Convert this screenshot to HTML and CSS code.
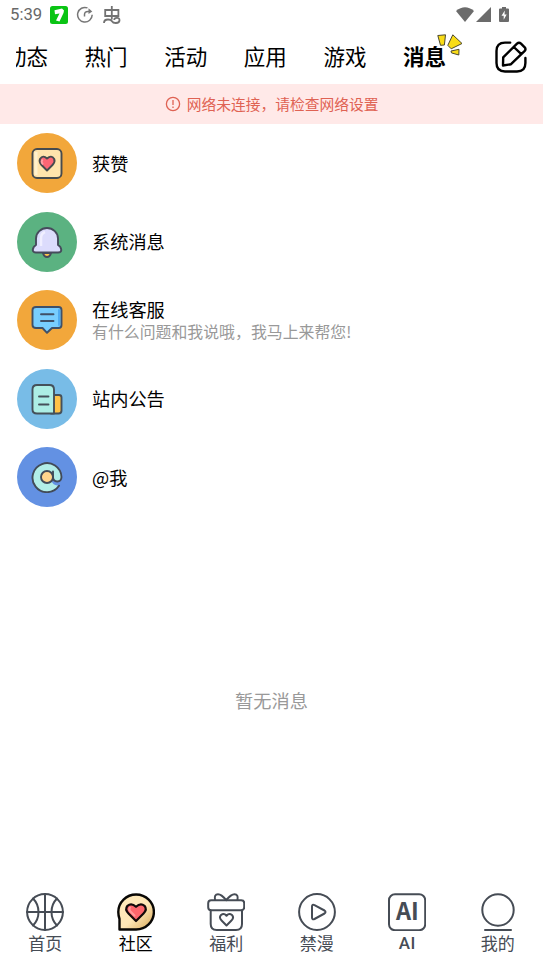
FILE: index.html
```html
<!DOCTYPE html>
<html lang="zh-CN">
<head>
<meta charset="UTF-8">
<title>消息</title>
<link rel="stylesheet" href="styles.css">
</head>
<body>
<div class="app">
  <header class="status">
    <span class="clock">5:39</span>
    <svg class="s-seven" viewBox="0 0 18 18"><rect width="18" height="18" rx="2.5" fill="#0ac414"/><path d="M4.500 4.200 12 2.500 14 4.500 13.500 7 9.500 15.500 6 14.500 9.500 7.500 5 8.200Z" fill="#fff"/></svg>
    <svg class="s-sync" viewBox="0 0 18 18" fill="none" stroke="#777" stroke-width="1.5"><path d="M11.5 1.9A7.3 7.3 0 1 0 16.2 8.8"/><path d="M8.5 10.5V8.5Q8.5 5.4 12 5.4H14.5"/><path d="M12.5 2.2 16.3 5.4 12.5 8Z" fill="#777" stroke="none"/></svg>
    <svg class="s-bug" viewBox="0 0 18 18" fill="none" stroke="#727272" stroke-width="1.8"><path d="M2.200 4H15.400V10H2.200ZM8.800 0V13.500M1 17Q1 13.500 5 13.500Q8 13.500 9 15.300T13 17Q16.500 17 16.500 14.300T13.800 11.800T11.300 14"/></svg>
    <span class="spacer"></span>
    <svg class="s-wifi" viewBox="0 0 18 15"><path d="M9 15 0 4Q9-3.5 18 4Z" fill="#6b6b6b"/></svg>
    <svg class="s-signal" viewBox="0 0 15 15"><path d="M15 0V15H0Z" fill="#6b6b6b"/></svg>
    <svg class="s-battery" viewBox="0 0 10 15"><path d="M3 0H7V1.5H9Q10 1.5 10 2.5V14Q10 15 9 15H1Q0 15 0 14V2.5Q0 1.5 1 1.5H3Z" fill="#6b6b6b"/><path d="M5.8 3.5 2.5 8.8H4.7V12.8L7.7 7.5H5.5Z" fill="#fff"/></svg>
  </header>

  <div class="topbar">
    <nav class="tabs">
      <span>动态</span><span>热门</span><span>活动</span><span>应用</span><span>游戏</span><span class="active">消息</span>
    </nav>
    <svg class="spark" viewBox="0 0 26 22" fill="#f9dc16" stroke="#4c4930" stroke-width="1" stroke-linejoin="round"><path d="M.8 1.500 8.500.8 7.400 11 3.500 11.300Z"/><path d="M15.800.8 25 9.500 14.200 14.800 10.800 11.300Z"/><path d="M14 17 22 15.300 21.800 21 14.500 18.900Z"/></svg>
    <svg class="compose" viewBox="0 0 32 32" fill="none" stroke="#000" stroke-width="2.4" stroke-linecap="round" stroke-linejoin="round"><path d="M15.2 1.6H10Q1.5 1.6 1.5 10V22Q1.5 30.5 10 30.5H22Q30.4 30.5 30.4 22V17"/><path d="M8 24.5 8.2 16.4 22 2.6Q24 .7 26 2.6L29.7 6.3Q31.3 8.3 29.5 10.2L16 23.2ZM18.8 6 26.3 13.2"/></svg>
  </div>

  <div class="notice">
    <svg viewBox="0 0 16 16" fill="none" stroke="#df6253" stroke-width="1.3"><circle cx="8" cy="8" r="6.6"/><path d="M8 4V9M8 10.5V12"/></svg>
    <span>网络未连接，请检查网络设置</span>
  </div>

  <main class="list">
    <div class="row">
      <div class="avatar orange">
        <svg viewBox="0 0 32 32" stroke="#464b4e" stroke-width="1.9" stroke-linejoin="round"><rect x="1.500" y="2" width="29" height="29" rx="4.500" fill="#ffe4ac"/><path d="M5 5V28" stroke="#fff1cd" stroke-width="3"/><path d="M16 23.5 10.5 18Q7.7 14.8 9 12Q12 7.5 16 11.5Q20.500 7.500 23.200 12Q24.500 15 21.500 18Z" fill="#fc6675"/><path d="M11.7 12.5Q9.500 15 12 17.300" fill="none" stroke="#ffa1a5" stroke-width="1.8"/></svg>
      </div>
      <div class="text"><div class="name">获赞</div></div>
    </div>
    <div class="row">
      <div class="avatar green">
        <svg viewBox="0 0 32 32" stroke="#464b5c" stroke-width="1.9" stroke-linejoin="round"><path d="M12 27Q13 31 16 31T20 27Z" fill="#ffc44d"/><path d="M5 19V12.500A11 10.500 0 0 1 27 12.500V19Q30 20.500 30.300 24Q30.200 26.500 27 26.500H5Q2 26.500 1.700 24Q2.200 20.500 5 19Z" fill="#dcdcfc"/><path d="M10 20V12Q10 7.500 14 6" fill="none" stroke="#f0efff" stroke-width="2.500"/></svg>
      </div>
      <div class="text"><div class="name">系统消息</div></div>
    </div>
    <div class="row">
      <div class="avatar orange">
        <svg viewBox="0 0 32 32" stroke="#3f5068" stroke-width="1.900" stroke-linejoin="round" stroke-linecap="round"><path d="M5 3H27.500Q30.500 3 30.500 6V21Q30.500 24 27.500 24H21L16 28.800 11.500 24H5Q1.500 24 1.500 21V6Q1.500 3 5 3Z" fill="#78ceff"/><path d="M28 6V21" stroke="#50acf1" stroke-width="2"/><path d="M10 10.300H22.500M10 17H22.500" fill="none"/></svg>
      </div>
      <div class="text"><div class="name">在线客服</div><div class="desc">有什么问题和我说哦，我马上来帮您!</div></div>
    </div>
    <div class="row">
      <div class="avatar sky">
        <svg viewBox="0 0 32 32" stroke="#45505a" stroke-width="1.900" stroke-linejoin="round" stroke-linecap="round"><path d="M20 12H28Q30.500 12 30.500 14.500V27.500Q30.500 30.500 27.500 30.500H20Z" fill="#ffc247"/><path d="M6 2H18.500Q23 2 23 6.500V30.500H6Q1.500 30.500 1.500 26.500V6.500Q1.500 2 6 2Z" fill="#aceee5"/><path d="M8 13.500H17.500M8 21.500H17.500" fill="none"/></svg>
      </div>
      <div class="text"><div class="name">站内公告</div></div>
    </div>
    <div class="row">
      <div class="avatar blue">
        <svg viewBox="0 0 32 32" stroke="#424b58" stroke-width="1.900" stroke-linejoin="round" stroke-linecap="round"><path d="M28 24.800A14.500 14.500 0 1 1 30.500 16Q30.300 20.500 26.300 20.500Q22 20.300 22 16A6 6 0 1 0 20.500 20Q22 24 26.300 24.500Z" fill="#b2eee8" stroke="none"/><circle cx="16" cy="16" r="6" fill="#ffd48c"/><path d="M28 24.800A14.500 14.500 0 1 1 30.500 16Q30.300 20.500 26.300 20.500Q22 20.300 22 16V10.500" fill="none"/></svg>
      </div>
      <div class="text"><div class="name">@我</div></div>
    </div>
  </main>

  <div class="empty">暂无消息</div>

  <nav class="bottom">
    <div class="item">
      <svg viewBox="0 0 38 38"><circle cx="19" cy="19" r="17.900"/><path d="M1 19H37M19 1V37M7 5.500Q12.500 11 12.500 19T7 32.500M31 5.500Q25.500 11 25.500 19T31 32.500"/></svg>
      <span>首页</span>
    </div>
    <div class="item on">
      <svg viewBox="0 0 38 38"><defs><linearGradient id="bubble" x1="0" y1="0" x2="1" y2="1"><stop offset="0" stop-color="#ffeabd"/><stop offset=".55" stop-color="#ffe7b6"/><stop offset="1" stop-color="#d5a452"/></linearGradient></defs><path d="M2.500 36.500V26Q1.300 22.500 1.300 19A17.800 17.500 0 1 1 19 36.500Z" fill="url(#bubble)" stroke="#090705" stroke-width="2.400" stroke-linejoin="round"/><path d="M19 28 11.500 20.500Q7.500 16.500 10.500 12.800Q14.500 9.500 19 13.800Q23.500 9.500 27.500 12.800Q30.500 16.500 26.500 20.500Z" fill="#fd666c" stroke="#130909" stroke-width="2.200"/><path d="M13 14.500Q11.500 16.500 13.500 18.500L17.500 22.500" stroke="#ff9a9a"/></svg>
      <span>社区</span>
    </div>
    <div class="item">
      <svg viewBox="0 0 38 38"><rect x="1.200" y="7.200" width="36" height="10" rx="3"/><path d="M3.700 17.500V31Q3.700 37 9.700 37H29Q35 37 35 31V17.500"/><path d="M8 7Q7 1.200 11 1.200Q14.500 1.200 19.200 7.200Q24 1.200 27.500 1.200Q31.500 1.200 30.500 7"/><path d="M19.500 32.500 14.800 27.800Q11.500 24.500 14 22Q17 19.700 19.500 22.800Q22 19.700 25 22Q27.500 24.500 24.200 27.800Z"/></svg>
      <span>福利</span>
    </div>
    <div class="item">
      <svg viewBox="0 0 38 38"><circle cx="19" cy="19" r="17.900"/><path d="M14 13.500Q14 11 16.500 12.200L26.500 17.500Q28.500 19 26.500 20.500L16.500 26Q14 27.200 14 24.500Z"/></svg>
      <span>禁漫</span>
    </div>
    <div class="item">
      <svg viewBox="0 0 38 38"><rect x="1" y="1.200" width="36.200" height="36" rx="6"/><text x="19.300" y="27" text-anchor="middle">AI</text></svg>
      <span class="latin">AI</span>
    </div>
    <div class="item">
      <svg viewBox="0 0 38 38"><circle cx="19" cy="17" r="15.700"/><path d="M6 37H32"/></svg>
      <span>我的</span>
    </div>
  </nav>
</div>
</body>
</html>
```
FILE: styles.css
```css
* { box-sizing: border-box; }
body {
  margin: 0;
  background: #fff;
  color: #000;
  font-family: "Noto Sans CJK SC", sans-serif;
}
svg { display: block; flex: none; }
.app {
  display: flex;
  flex-direction: column;
  width: 543px;
  height: 965px;
  overflow: hidden;
}
.status {
  display: flex;
  align-items: center;
  height: 30px;
  padding: 0 34px 1px 10px;
  flex: none;
}
.clock {
  width: 40px;
  font: 16.7px/30px Roboto, sans-serif;
  color: #686868;
}
.s-seven { width: 18px; height: 18px; }
.s-sync { width: 18px; height: 18px; margin-left: 8px; }
.s-bug { width: 18px; height: 18px; margin-left: 9px; }
.spacer { flex: 1; }
.s-wifi { width: 18px; height: 15px; }
.s-signal { width: 15px; height: 15px; margin-left: 2px; }
.s-battery { width: 10px; height: 15px; margin: 0 0 0 8px; }
.topbar {
  position: relative;
  display: flex;
  align-items: center;
  justify-content: space-between;
  height: 54px;
  padding: 0 16.5px 0 16px;
  flex: none;
}
.tabs {
  display: flex;
  justify-content: flex-end;
  gap: 36.6px;
  width: 430px;
  height: 54px;
  overflow: hidden;
  font-size: 21.5px;
  line-height: 52px;
  white-space: nowrap;
}
.tabs .active { font-weight: 700; }
.spark {
  position: absolute;
  left: 437px;
  top: 4px;
  width: 26px;
  height: 22px;
}
.compose { width: 32px; height: 32px; }
.notice {
  display: flex;
  align-items: center;
  justify-content: center;
  gap: 6px;
  height: 40px;
  flex: none;
  background: #ffe9e8;
  color: #df6253;
  font-size: 14.75px;
}
.notice svg { width: 16px; height: 16px; }
.notice span { padding-bottom: 1px; }
.list { flex: none; }
.row {
  display: flex;
  align-items: center;
  gap: 15px;
  height: 78.5px;
  padding-left: 17px;
}
.avatar {
  display: flex;
  align-items: center;
  justify-content: center;
  width: 60px;
  height: 60px;
  border-radius: 50%;
}
.avatar svg { width: 32px; height: 32px; }
.text { padding-bottom: 1px; }
.orange { background: #f2a73b; }
.green { background: #5bb281; }
.sky { background: #78bce7; }
.blue { background: #6391e3; }
.name { font-size: 18.2px; line-height: 24px; }
.desc { font-size: 15.9px; line-height: 22px; color: #999; }
.empty {
  display: flex;
  align-items: center;
  justify-content: center;
  flex: 1;
  font-size: 18.2px;
  color: #999;
}
.bottom {
  display: grid;
  grid-template-columns: repeat(6, 1fr);
  height: 82px;
  padding-top: 10px;
  flex: none;
}
.item {
  display: flex;
  flex-direction: column;
  align-items: center;
  font-size: 17px;
  line-height: 24px;
  color: #464c55;
}
.item svg {
  width: 38px;
  height: 38px;
  fill: none;
  stroke: #464c55;
  stroke-width: 2;
  stroke-linecap: round;
  stroke-linejoin: round;
}
.item text {
  font: 700 23.5px "Noto Sans CJK SC", sans-serif;
  fill: #464c55;
  stroke: none;
}
.item .latin {
  font-family: Roboto, sans-serif;
  font-weight: 500;
  letter-spacing: .5px;
}
.item.on { color: #000; }
```
